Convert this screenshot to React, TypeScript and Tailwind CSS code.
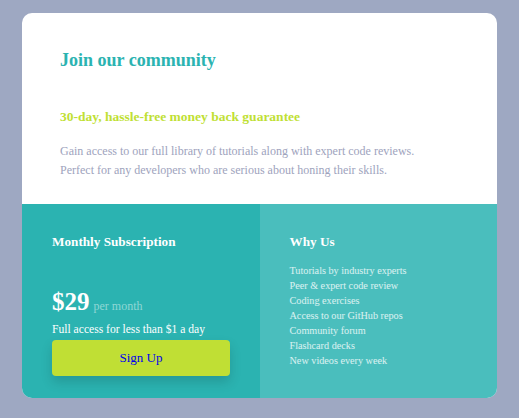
export default function App() {
  const reasons = [
    'Tutorials by industry experts',
    'Peer & expert code review',
    'Coding exercises',
    'Access to our GitHub repos',
    'Community forum',
    'Flashcard decks',
    'New videos every week',
  ];

  return (
    <div className="min-h-[418px] bg-[#9ea8c2] pt-[13px] pl-[22px] font-['Liberation_Serif',serif]">
      <div className="w-[475px] overflow-hidden rounded-[10px] bg-white">
        <div className="px-[38px] pt-[35px] pb-[24px]">
          <h1 className="text-[18px] leading-[24px] font-bold text-[#2bb3b1]">Join our community</h1>
          <h2 className="mt-[35px] text-[13.5px] leading-[20px] font-bold text-[#c0df34]">
            30-day, hassle-free money back guarantee
          </h2>
          <p className="mt-[15px] text-[12px] leading-[19px] text-[#9ea3bd]">
            Gain access to our full library of tutorials along with expert code reviews.
            <br />
            Perfect for any developers who are serious about honing their skills.
          </p>
        </div>
        <div className="grid grid-cols-2">
          <div className="bg-[#2bb3b1] px-[30px] pt-[28px] pb-[22px] text-white">
            <h3 className="text-[13.2px] leading-[20px] font-bold">Monthly Subscription</h3>
            <div className="mt-[35px] flex items-baseline gap-[4px]">
              <span className="text-[25px] leading-[30px] font-bold">$29</span>
              <span className="text-[12px] text-[#8fd7d5]">per month</span>
            </div>
            <p className="mt-[4px] text-[11.6px] leading-[17px]">Full access for less than $1 a day</p>
            <button className="mt-[2px] h-[36px] w-[178px] rounded-[4px] bg-[#c0df34] text-[13px] text-[#0000ee] shadow-[0_6px_12px_rgba(0,0,0,0.15)]">
              Sign Up
            </button>
          </div>
          <div className="bg-[#4abebd] px-[30px] pt-[28px] text-white">
            <h3 className="text-[13.2px] leading-[20px] font-bold">Why Us</h3>
            <ul className="mt-[11px] text-[10.2px] leading-[15px] text-white/80">
              {reasons.map((r) => (
                <li key={r}>{r}</li>
              ))}
            </ul>
          </div>
        </div>
      </div>
    </div>
  );
}
